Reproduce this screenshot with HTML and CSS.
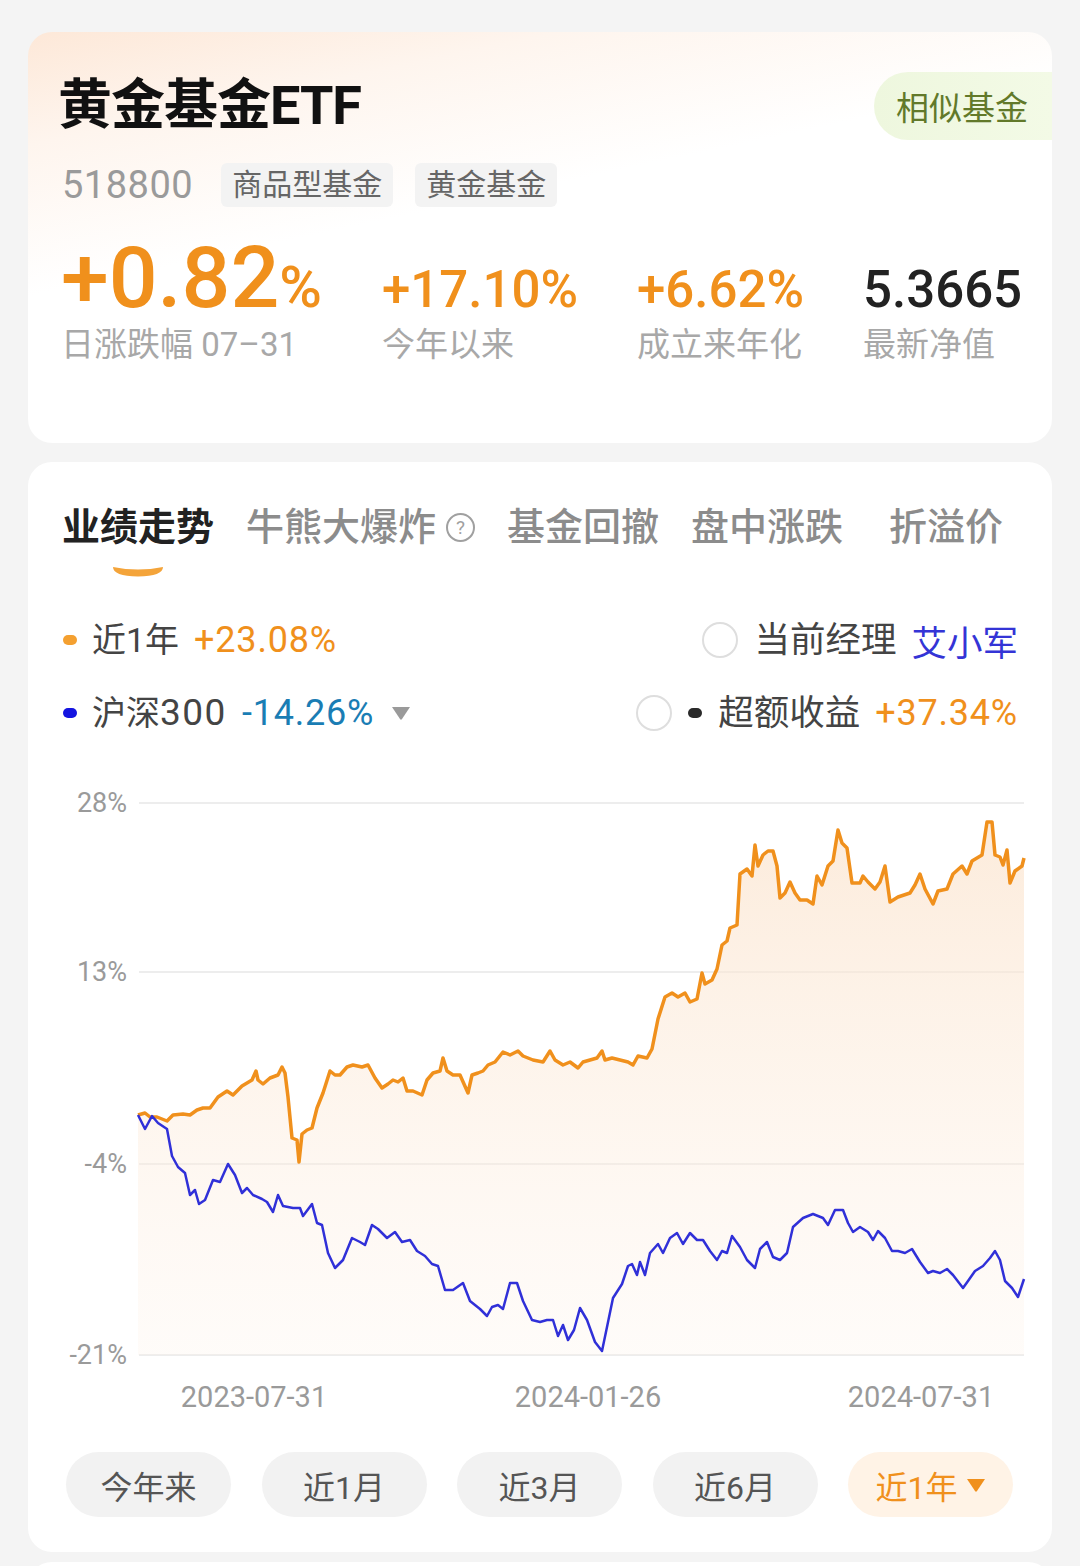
FILE: index.html
```html
<!DOCTYPE html>
<html lang="zh-CN">
<head>
    <meta charset="UTF-8">
    <meta name="viewport" content="width=device-width, initial-scale=1.0">
    <title>黄金基金ETF</title>
    <link rel="stylesheet" href="styles.css">
</head>
<body>
<main class="page">
    <section class="card summary">
        <div class="title-row">
            <h1 class="fund-name">黄金基金ETF</h1>
            <a class="similar-btn" href="#similar">相似基金</a>
        </div>
        <div class="meta-row">
            <span class="fund-code">518800</span>
            <span class="tag">商品型基金</span>
            <span class="tag">黄金基金</span>
        </div>
        <div class="stats">
            <div class="stat-value big up">+0.82<span class="pct">%</span></div>
            <div class="stat-value up">+17.10%</div>
            <div class="stat-value up">+6.62%</div>
            <div class="stat-value">5.3665</div>
            <div class="stat-label">日涨跌幅 07–31</div>
            <div class="stat-label">今年以来</div>
            <div class="stat-label">成立来年化</div>
            <div class="stat-label">最新净值</div>
        </div>
    </section>

    <section class="card trend">
        <nav class="tabs">
            <div class="tab active">
                <span>业绩走势</span>
                <svg class="tab-mark" width="52" height="12" viewBox="0 0 52 12">
                    <path d="M1 2 Q26 7 51 2 Q51 11 26 11.5 Q1 11 1 2 Z" fill="#f4a43a"/>
                </svg>
            </div>
            <div class="tab">牛熊大爆炸<span class="help">?</span></div>
            <div class="tab">基金回撤</div>
            <div class="tab">盘中涨跌</div>
            <div class="tab last">折溢价</div>
        </nav>

        <div class="legend">
            <div class="legend-row">
                <div class="legend-item">
                    <i class="dot orange"></i>
                    <span class="legend-name">近1年</span>
                    <span class="legend-num up">+23.08%</span>
                </div>
                <div class="legend-item">
                    <i class="radio"></i>
                    <span class="legend-name wide">当前经理</span>
                    <span class="manager">艾小军</span>
                </div>
            </div>
            <div class="legend-row">
                <div class="legend-item">
                    <i class="dot blue"></i>
                    <span class="legend-name">沪深<span class="digits">300</span></span>
                    <span class="legend-num down">-14.26%</span>
                    <svg class="caret" width="22" height="16" viewBox="0 0 22 16">
                        <path d="M2 2 H20 L12 14 Q11 15.5 10 14 Z" fill="#9a9a9a"/>
                    </svg>
                </div>
                <div class="legend-item">
                    <i class="radio"></i>
                    <i class="dot black"></i>
                    <span class="legend-name wide">超额收益</span>
                    <span class="legend-num up">+37.34%</span>
                </div>
            </div>
        </div>

        <svg class="chart" width="1024" height="640" viewBox="28 780 1024 640">
            <defs>
                <linearGradient id="fundFill" gradientUnits="userSpaceOnUse" x1="0" y1="820" x2="0" y2="1355">
                    <stop offset="0" stop-color="#fbe3cc" stop-opacity="0.7"/>
                    <stop offset="1" stop-color="#fdf1e6" stop-opacity="0.25"/>
                </linearGradient>
            </defs>
            <g class="grid">
                <line x1="139" y1="803" x2="1024" y2="803"/>
                <line x1="139" y1="972" x2="1024" y2="972"/>
                <line x1="139" y1="1164" x2="1024" y2="1164"/>
                <line x1="139" y1="1355" x2="1024" y2="1355"/>
            </g>
            <g class="y-labels">
                <text x="127" y="812">28%</text>
                <text x="127" y="981">13%</text>
                <text x="127" y="1173">-4%</text>
                <text x="127" y="1364">-21%</text>
            </g>
            <g class="x-labels">
                <text x="254" y="1407">2023-07-31</text>
                <text x="588" y="1407">2024-01-26</text>
                <text x="921" y="1407">2024-07-31</text>
            </g>
            <polygon fill="url(#fundFill)" points="138,1115 145,1113 150,1117 157,1117 167,1121 173,1115 183,1114 190,1115 197,1110 203,1108 210,1108 218,1097 227,1091 233,1095 242,1086 252,1080 256,1071 258,1080 263,1084 270,1078 278,1075 282,1067 285,1073 288,1097 292,1138 297,1140 299,1162 302,1134 307,1130 312,1128 317,1108 323,1093 330,1071 335,1075 340,1075 347,1067 353,1065 362,1067 368,1065 375,1078 382,1088 388,1084 393,1080 398,1082 403,1078 407,1091 413,1091 422,1095 427,1080 433,1073 440,1071 443,1058 447,1071 453,1075 460,1075 468,1093 472,1075 478,1073 483,1071 488,1065 495,1062 503,1052 510,1055 518,1051 523,1056 533,1060 543,1062 550,1051 555,1060 563,1065 570,1062 578,1068 583,1062 590,1060 597,1058 602,1051 605,1060 612,1058 620,1060 628,1062 633,1065 638,1056 647,1058 652,1049 658,1019 665,997 672,993 678,997 685,993 690,1002 697,999 702,973 705,984 712,980 717,969 722,945 727,941 730,928 737,925 740,874 747,869 752,876 755,845 758,866 763,855 768,851 773,851 777,866 780,898 785,893 790,882 795,893 800,900 807,900 813,904 817,876 822,885 828,866 833,861 838,830 842,843 847,848 852,883 860,883 863,876 868,882 875,889 880,882 885,866 890,902 898,897 910,893 915,885 920,874 925,889 933,904 938,891 947,889 953,874 962,866 967,874 972,861 982,855 987,822 992,822 995,855 1000,857 1003,865 1007,850 1010,883 1015,871 1022,866 1024,858 1024,1355 138,1355"/>
            <polyline class="line-fund" points="138,1115 145,1113 150,1117 157,1117 167,1121 173,1115 183,1114 190,1115 197,1110 203,1108 210,1108 218,1097 227,1091 233,1095 242,1086 252,1080 256,1071 258,1080 263,1084 270,1078 278,1075 282,1067 285,1073 288,1097 292,1138 297,1140 299,1162 302,1134 307,1130 312,1128 317,1108 323,1093 330,1071 335,1075 340,1075 347,1067 353,1065 362,1067 368,1065 375,1078 382,1088 388,1084 393,1080 398,1082 403,1078 407,1091 413,1091 422,1095 427,1080 433,1073 440,1071 443,1058 447,1071 453,1075 460,1075 468,1093 472,1075 478,1073 483,1071 488,1065 495,1062 503,1052 510,1055 518,1051 523,1056 533,1060 543,1062 550,1051 555,1060 563,1065 570,1062 578,1068 583,1062 590,1060 597,1058 602,1051 605,1060 612,1058 620,1060 628,1062 633,1065 638,1056 647,1058 652,1049 658,1019 665,997 672,993 678,997 685,993 690,1002 697,999 702,973 705,984 712,980 717,969 722,945 727,941 730,928 737,925 740,874 747,869 752,876 755,845 758,866 763,855 768,851 773,851 777,866 780,898 785,893 790,882 795,893 800,900 807,900 813,904 817,876 822,885 828,866 833,861 838,830 842,843 847,848 852,883 860,883 863,876 868,882 875,889 880,882 885,866 890,902 898,897 910,893 915,885 920,874 925,889 933,904 938,891 947,889 953,874 962,866 967,874 972,861 982,855 987,822 992,822 995,855 1000,857 1003,865 1007,850 1010,883 1015,871 1022,866 1024,858"/>
            <polyline class="line-index" points="138,1115 145,1129 152,1116 158,1123 167,1129 172,1156 178,1167 185,1173 190,1195 195,1190 199,1204 205,1200 213,1180 220,1182 228,1164 235,1175 242,1193 247,1188 253,1195 262,1199 267,1202 273,1212 278,1195 283,1206 293,1208 300,1208 303,1216 312,1204 317,1223 322,1225 328,1253 335,1268 343,1260 352,1238 360,1242 365,1245 372,1225 378,1229 387,1238 395,1232 402,1242 410,1240 417,1251 425,1256 432,1264 438,1266 445,1290 453,1290 463,1283 470,1301 480,1309 487,1316 492,1307 498,1305 503,1309 510,1283 517,1283 523,1301 532,1320 540,1322 547,1320 553,1320 558,1336 563,1325 568,1340 574,1330 580,1308 587,1320 595,1342 602,1351 607,1327 613,1298 622,1284 628,1266 632,1264 637,1275 640,1262 645,1275 650,1253 658,1244 663,1253 670,1238 677,1233 683,1244 690,1233 697,1240 703,1240 710,1251 717,1260 722,1251 727,1253 732,1236 740,1247 747,1260 755,1268 760,1249 767,1242 773,1257 780,1260 787,1253 793,1227 803,1218 813,1214 823,1218 828,1225 835,1210 843,1210 848,1223 853,1232 860,1227 868,1232 873,1240 878,1231 885,1238 892,1251 898,1251 905,1253 912,1249 920,1262 928,1273 933,1271 940,1273 947,1269 953,1275 963,1288 968,1281 975,1271 983,1266 990,1258 995,1251 1000,1260 1005,1281 1012,1288 1018,1297 1024,1279"/>
        </svg>

        <div class="ranges">
            <button class="range">今年来</button>
            <button class="range">近1月</button>
            <button class="range">近3月</button>
            <button class="range">近6月</button>
            <button class="range active">近1年
                <svg width="20" height="16" viewBox="0 0 20 16">
                    <path d="M1 2 H19 L11 14 Q10 15.5 9 14 Z" fill="#f0901c"/>
                </svg>
            </button>
        </div>
    </section>

    <section class="card next"></section>
</main>
</body>
</html>
```

FILE: styles.css
```css
body {
    margin: 0;
    padding: 0;
    background-color: #f4f4f4;
    font-family: 'Roboto', 'Noto Sans CJK SC', sans-serif;
    color: #333;
    height: 1566px;
    overflow: hidden;
}
.page {
    padding-top: 32px;
}
.card {
    margin: 0 28px;
    background-color: #fff;
    border-radius: 24px;
    box-sizing: border-box;
}

/* summary card */
.summary {
    height: 411px;
    padding: 40px 0 0 30px;
    background: linear-gradient(168deg, #fde8d8 0%, #fef5ee 18%, #fff 42%);
    overflow: hidden;
}
.title-row {
    display: flex;
    justify-content: space-between;
    align-items: center;
    height: 68px;
}
.fund-name {
    margin: 0;
    font-size: 54px;
    line-height: 68px;
    font-weight: 700;
    color: #111;
    letter-spacing: -1px;
}
.similar-btn {
    display: flex;
    align-items: center;
    height: 68px;
    padding: 0 24px 0 22px;
    border-radius: 34px 0 0 34px;
    background: linear-gradient(90deg, #eef7de 0%, #f3fae6 100%);
    color: #62792a;
    font-size: 33px;
    text-decoration: none;
}
.meta-row {
    display: flex;
    align-items: center;
    margin-top: 23px;
    height: 44px;
}
.fund-code {
    font-size: 38px;
    color: #9a9a9a;
    margin: 0 28px 0 4px;
    letter-spacing: 0.5px;
}
.tag {
    height: 44px;
    line-height: 44px;
    padding: 0 11px;
    margin-right: 22px;
    background-color: #f3f3f3;
    border-radius: 6px;
    color: #666;
    font-size: 30px;
}
.stats {
    display: grid;
    grid-template-columns: 321px 255px 226px auto;
    align-items: baseline;
    margin-top: 28px;
    padding-left: 3px;
}
.stat-value {
    font-size: 51px;
    line-height: 1;
    font-weight: 500;
    color: #222;
}
.stat-value.big {
    font-size: 86px;
}
.stat-value .pct {
    font-size: 58px;
}
.up {
    color: #f0901c;
}
.stat-label {
    margin-top: 2px;
    font-size: 33px;
    line-height: 44px;
    color: #a8a8a8;
}

/* trend card */
.trend {
    margin-top: 19px;
    height: 1090px;
    padding: 40px 0 0 0;
}
.tabs {
    display: flex;
    align-items: flex-start;
    padding-left: 34px;
}
.tab {
    display: flex;
    align-items: center;
    font-size: 38px;
    line-height: 50px;
    font-weight: 500;
    color: #8c8c8c;
    margin-right: 32px;
}
.tab.active {
    flex-direction: column;
    font-weight: 700;
    color: #222;
}
.tab.last {
    margin-left: 14px;
}
.tab-mark {
    margin-top: 13px;
}
.help {
    display: inline-flex;
    justify-content: center;
    align-items: center;
    width: 25px;
    height: 25px;
    margin-left: 10px;
    border: 2px solid #a0a0a0;
    border-radius: 50%;
    font-size: 19px;
    line-height: 1;
    font-weight: 400;
    color: #a0a0a0;
}
.legend {
    margin-top: 41px;
    padding: 0 34px 0 35px;
}
.legend-row {
    display: flex;
    justify-content: space-between;
    align-items: center;
    height: 44px;
    margin-bottom: 29px;
}
.legend-item {
    display: flex;
    align-items: center;
}
.dot {
    display: inline-block;
    width: 14px;
    height: 10px;
    border-radius: 5px;
    margin-right: 15px;
}
.dot.orange {
    background-color: #f4a030;
}
.dot.blue {
    background-color: #1414e0;
}
.dot.black {
    background-color: #2a2a2a;
    margin-right: 16px;
}
.radio {
    display: inline-block;
    width: 32px;
    height: 32px;
    border: 2px solid #dedede;
    border-radius: 50%;
    margin-right: 16px;
}
.legend-name {
    font-size: 34px;
    line-height: 44px;
    color: #444;
    margin-right: 15px;
}
.legend-name.wide {
    font-size: 35.5px;
}
.legend-name .digits {
    font-size: 37px;
    letter-spacing: 1.5px;
}
.legend-num {
    font-size: 36px;
    letter-spacing: 0.8px;
}
.legend-num.down {
    color: #1a7db4;
}
.manager {
    font-size: 35.5px;
    color: #3434d6;
}
.caret {
    margin-left: 16px;
}
.chart {
    display: block;
    margin-top: 45px;
}
.grid line {
    stroke: #ededed;
    stroke-width: 2;
}
.chart text {
    font-family: 'Roboto', sans-serif;
    fill: #9a9a9a;
}
.y-labels text {
    font-size: 27px;
    text-anchor: end;
}
.x-labels text {
    font-size: 29px;
    text-anchor: middle;
}
.line-fund {
    fill: none;
    stroke: #f0901c;
    stroke-width: 3.5;
    stroke-linejoin: round;
}
.line-index {
    fill: none;
    stroke: #3030d8;
    stroke-width: 2.5;
    stroke-linejoin: round;
}
.ranges {
    display: grid;
    grid-template-columns: repeat(5, 165px);
    column-gap: 30.5px;
    margin-top: 32px;
    padding-left: 38px;
}
.range {
    display: flex;
    justify-content: center;
    align-items: center;
    gap: 8px;
    height: 65px;
    border: none;
    border-radius: 33px;
    background-color: #f2f2f2;
    color: #555;
    font-family: 'Roboto', 'Noto Sans CJK SC', sans-serif;
    font-size: 32px;
    padding: 0;
}
.range.active {
    background-color: #fff3e6;
    color: #f0901c;
}
.next {
    margin-top: 10px;
    height: 60px;
}
```
